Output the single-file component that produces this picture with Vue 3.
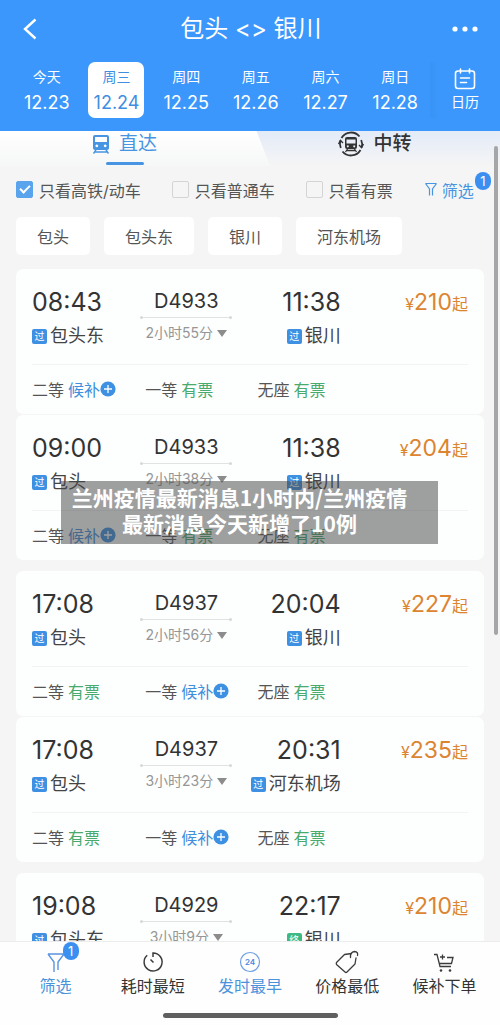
<script setup>
import { ref } from 'vue'

const days = [
  { week: '今天', date: '12.23' },
  { week: '周三', date: '12.24' },
  { week: '周四', date: '12.25' },
  { week: '周五', date: '12.26' },
  { week: '周六', date: '12.27' },
  { week: '周日', date: '12.28' },
]
const activeDay = ref('12.24')

const options = ref([
  { id: 'fast', label: '只看高铁/动车', checked: true },
  { id: 'normal', label: '只看普通车', checked: false },
  { id: 'available', label: '只看有票', checked: false },
])

const stations = ['包头', '包头东', '银川', '河东机场']

const seats = (a, b, c) => [
  { name: '二等', wait: a },
  { name: '一等', wait: b },
  { name: '无座', wait: c },
]

const groups = [
  [
    { dep: '08:43', from: '包头东', no: 'D4933', time: '2小时55分', arr: '11:38', to: '银川', end: false, price: 210, seats: seats(true, false, false) },
    { dep: '09:00', from: '包头', no: 'D4933', time: '2小时38分', arr: '11:38', to: '银川', end: false, price: 204, seats: seats(true, false, false) },
  ],
  [
    { dep: '17:08', from: '包头', no: 'D4937', time: '2小时56分', arr: '20:04', to: '银川', end: false, price: 227, seats: seats(false, true, false) },
    { dep: '17:08', from: '包头', no: 'D4937', time: '3小时23分', arr: '20:31', to: '河东机场', end: false, price: 235, seats: seats(false, true, false) },
  ],
  [
    { dep: '19:08', from: '包头东', no: 'D4929', time: '3小时9分', arr: '22:17', to: '银川', end: true, price: 210, seats: seats(false, false, false) },
  ],
]
</script>

<template>
  <div class="page">
    <header class="header">
      <div class="title-bar">
        <button class="icon-btn" type="button" aria-label="返回">
          <svg width="16" height="22" viewBox="0 0 16 22"><path d="M13.500 1.500 3 11l10.500 9.500" fill="none" stroke="#fff" stroke-width="2.400" /></svg>
        </button>
        <h1 class="title">包头 &lt;&gt; 银川</h1>
        <button class="icon-btn" type="button" aria-label="更多">
          <svg width="26" height="6" viewBox="0 0 26 6" fill="#fff"><circle cx="3" cy="3" r="2.6" /><circle cx="13" cy="3" r="2.6" /><circle cx="23" cy="3" r="2.6" /></svg>
        </button>
      </div>
      <div class="dates">
        <div class="days">
          <button
            v-for="d in days"
            :key="d.date"
            type="button"
            class="day"
            :class="{ active: d.date === activeDay }"
            @click="activeDay = d.date"
          >
            <span class="week">{{ d.week }}</span>
            <span class="date">{{ d.date }}</span>
          </button>
        </div>
        <button class="calendar" type="button">
          <svg width="22" height="22" viewBox="0 0 22 22" fill="none" stroke="#fff" stroke-width="1.6" stroke-linecap="round">
            <rect x="1.5" y="3" width="19" height="17.5" rx="2.5" />
            <path d="M6.500 1v4M15.500 1v4M6.500 10h9M6.500 14.500h6" />
          </svg>
          <span>日历</span>
        </button>
      </div>
    </header>

    <main class="main">
      <nav class="tabs">
        <button class="tab tab-on" type="button">
          <span class="tab-body">
            <svg width="18" height="20" viewBox="0 0 18 20">
              <path fill="#4795e2" fill-rule="evenodd" d="M3 1h12q2 0 2 2v11q0 2-2 2H3q-2 0-2-2V3q0-2 2-2zM3 3v5h12V3zM4.800 10.500a1.400 1.400 0 1 0 .01 0zM13.200 10.500a1.400 1.400 0 1 0 .01 0z" />
              <path d="M4 16 1.500 19.500M14 16l2.500 3.500M3 18h12" stroke="#4795e2" stroke-width="1.400" fill="none" />
            </svg>
            直达
          </span>
        </button>
        <button class="tab" type="button">
          <span class="tab-body">
            <svg width="26" height="26" viewBox="0 0 26 26">
              <g fill="none" stroke="#333" stroke-width="1.800">
                <path d="M4.500 20.500A11 11 0 0 0 22.500 19M21.500 5.500A11 11 0 0 0 3.500 7" />
                <path d="M2.300 9.500A11.200 11.200 0 0 0 2.800 17M23.700 16.500A11.200 11.200 0 0 0 23.200 9" />
                <path d="M.5 13l2-3.500 2.500 2.500M25.500 13l-2 3.500L21 14" stroke-width="1.400" />
                <path d="M9.500 18 7.500 21M16.500 18l2 3M9 19.500h8" stroke-width="1.300" />
              </g>
              <path fill="#333" fill-rule="evenodd" d="M9 6h8q2 0 2 2v8q0 2-2 2H9q-2 0-2-2V8q0-2 2-2zM8.500 8.500v4h9v-4zM9.800 14.200a1 1 0 1 0 .01 0zM16.200 14.200a1 1 0 1 0 .01 0z" />
            </svg>
            中转
          </span>
        </button>
      </nav>

      <div class="filters">
        <label v-for="o in options" :key="o.id" class="check">
          <input v-model="o.checked" type="checkbox" />
          <span>{{ o.label }}</span>
        </label>
        <button class="filter-btn" type="button">
          <svg width="14" height="15" viewBox="0 0 14 15" fill="none" stroke="#4795e2" stroke-width="1.200"><path d="M1.500 1.500h11M1.500 1.500 5.500 7v6.500M12.500 1.500 8.500 7v6.500" /></svg>
          筛选
          <span class="badge">1</span>
        </button>
      </div>

      <div class="chips">
        <button v-for="s in stations" :key="s" class="chip" type="button">{{ s }}</button>
      </div>

      <div class="groups">
        <section v-for="(g, i) in groups" :key="i" class="group">
          <article v-for="(t, k) in g" :key="k" class="card">
            <div class="trip">
              <div class="end">
                <div class="clock">{{ t.dep }}</div>
                <div class="station"><span class="tag">过</span>{{ t.from }}</div>
              </div>
              <div class="middle">
                <div class="train">{{ t.no }}</div>
                <div class="line"></div>
                <div class="duration">
                  {{ t.time }}
                  <svg width="10" height="7" viewBox="0 0 10 7"><path d="M0 0h10L5 7z" fill="#8c8c8c" /></svg>
                </div>
              </div>
              <div class="end arrive">
                <div class="clock">{{ t.arr }}</div>
                <div class="station">
                  <span class="tag" :class="{ final: t.end }">{{ t.end ? '终' : '过' }}</span>{{ t.to }}
                </div>
              </div>
              <div class="price"><span>¥</span><b>{{ t.price }}</b><span>起</span></div>
            </div>
            <div class="seats">
              <div v-for="s in t.seats" :key="s.name" class="seat">
                <span>{{ s.name }}</span>
                <span v-if="s.wait" class="wait">
                  候补<svg width="16" height="16" viewBox="0 0 16 16"><circle cx="8" cy="8" r="7.600" fill="#3e90e2" /><path d="M8 4v8M4 8h8" stroke="#fff" stroke-width="1.300" /></svg>
                </span>
                <span v-else class="ok">有票</span>
              </div>
            </div>
          </article>
        </section>
      </div>
      <div class="scrollbar"></div>
    </main>

    <div class="caption">兰州疫情最新消息1小时内/兰州疫情<br />最新消息今天新增了10例</div>

    <footer class="footer">
      <nav class="tools">
        <button class="tool blue" type="button">
          <span class="tool-icon">
            <svg width="22" height="22" viewBox="0 0 22 22" fill="none" stroke="#5b93e0" stroke-width="1.400"><path d="M3 3h16M3 3l6 8v10M19 3l-6 8v8" /></svg>
            <span class="badge">1</span>
          </span>
          筛选
        </button>
        <button class="tool" type="button">
          <span class="tool-icon">
            <svg width="22" height="22" viewBox="0 0 22 22" fill="none" stroke="#3c3c3c" stroke-width="1.500"><path d="M11 6V2a9 9 0 1 1-5.800 2.200M8.500 8.500l3 3" /></svg>
          </span>
          耗时最短
        </button>
        <button class="tool blue" type="button">
          <span class="tool-icon">
            <svg width="22" height="22" viewBox="0 0 22 22" fill="none" stroke="#6f9fe6"><circle cx="11" cy="11" r="9.500" stroke-width="1.200" /><text x="11" y="13.500" text-anchor="middle" class="icon-text">24</text></svg>
          </span>
          发时最早
        </button>
        <button class="tool" type="button">
          <span class="tool-icon">
            <svg width="24" height="24" viewBox="0 0 24 24" fill="none" stroke="#3c3c3c" stroke-width="1.300" stroke-linejoin="round" stroke-linecap="round"><path d="M16.500 3.500 9.500 4.500 1.500 12.500Q1 13.500 1.500 14.500L10 22Q11 23 12 22L20 14 21 8M15.500 7.500Q15 2 19.500 1.500 23.500 2 22.500 5.500" /></svg>
          </span>
          价格最低
        </button>
        <button class="tool" type="button">
          <span class="tool-icon">
            <svg width="22" height="22" viewBox="0 0 22 22" fill="none" stroke="#3c3c3c" stroke-width="1.300"><path d="M1 3.500h3L7 15.500h11M14 6.500h6L18.500 12.500H6.500M9.500 3.500v5M7 6h5" /><circle cx="8" cy="19.500" r="1.300" fill="#3c3c3c" stroke="none" /><circle cx="17" cy="19.500" r="1.300" fill="#3c3c3c" stroke="none" /></svg>
          </span>
          候补下单
        </button>
      </nav>
      <div class="home-bar"></div>
    </footer>
  </div>
</template>

<style>
body {
  margin: 0;
  background: #f5f5f5;
}
</style>

<style scoped>
.page {
  position: relative;
  display: flex;
  flex-direction: column;
  height: 100vh;
  overflow: hidden;
  background: #f5f5f5;
  color: #333;
  font-family: Inter, "Noto Sans CJK SC", sans-serif;
  font-size: 16px;
}
button {
  margin: 0;
  padding: 0;
  border: 0;
  background: none;
  color: inherit;
  font: inherit;
}
svg {
  display: block;
  flex: none;
}
.header {
  flex: none;
  height: 131px;
  background: #3b97fb;
  color: #fff;
}
.title-bar {
  display: flex;
  align-items: center;
  justify-content: space-between;
  height: 58px;
  padding: 0 20px 0 22px;
}
.icon-btn {
  display: flex;
  align-items: center;
  width: 28px;
  height: 28px;
}
.title {
  margin: 0;
  font-size: 24px;
  font-weight: 400;
  line-height: 32px;
}
.dates {
  display: flex;
  padding-top: 4px;
}
.days {
  display: grid;
  flex: 1;
  grid-template-columns: repeat(6, 1fr);
  justify-items: center;
  padding-left: 12px;
}
.day {
  display: flex;
  flex-direction: column;
  align-items: center;
  width: 56px;
  height: 56px;
  padding-top: 4px;
  box-sizing: border-box;
  border-radius: 7px;
}
.day.active {
  background: #fff;
  color: #3f8ee0;
}
.week {
  font-size: 14px;
  line-height: 22px;
}
.date {
  font-size: 18px;
  line-height: 29px;
}
.calendar {
  display: flex;
  flex-direction: column;
  align-items: center;
  gap: 1px;
  width: 70px;
  padding-top: 6px;
  background: linear-gradient(90deg, #3893f6, #3b97fb 8px);
  font-size: 14px;
  line-height: 22px;
}
.main {
  position: relative;
  flex: 1;
  min-height: 0;
  overflow: hidden;
}
.tabs {
  display: grid;
  grid-template-columns: 270fr 230fr;
  height: 35px;
  background: linear-gradient(#e3ebf8, #f5f5f5);
}
.tab {
  display: flex;
  justify-content: center;
  font-size: 19px;
  font-weight: 500;
  line-height: 24px;
}
.tab-on {
  padding-right: 21px;
  background: linear-gradient(#fff, #f6f7f7);
  clip-path: polygon(0 0, 95% 0, 100% 100%, 0 100%);
  color: #4795e2;
  font-weight: 400;
}
.tab:last-child {
  padding-right: 20px;
}
.tab-body {
  position: relative;
  display: flex;
  align-items: center;
  gap: 9px;
  height: 25px;
}
.tab-on .tab-body::after {
  content: "";
  position: absolute;
  left: 14px;
  bottom: -9px;
  width: 38px;
  height: 3px;
  border-radius: 2px;
  background: #4795e2;
}
.filters {
  display: flex;
  align-items: center;
  gap: 31px;
  height: 47px;
  padding-left: 16px;
  color: #555;
  white-space: nowrap;
}
.check {
  display: flex;
  align-items: center;
  gap: 6px;
}
.check input {
  appearance: none;
  width: 17px;
  height: 17px;
  margin: 0;
  border: 1px solid #d4d4d6;
  border-radius: 2px;
}
.check input:checked {
  border-color: #5aa4ee;
  background: #5aa4ee;
}
.check input:checked::before {
  content: "";
  display: block;
  width: 8px;
  height: 4px;
  margin: 3px 0 0 3px;
  border: solid #fff;
  border-width: 0 0 2px 2px;
  transform: rotate(-45deg);
}
.filter-btn {
  position: relative;
  display: flex;
  align-items: center;
  gap: 4px;
  color: #4795e2;
}
.badge {
  position: absolute;
  width: 16px;
  height: 18px;
  border-radius: 8px;
  background: #3b8ff0;
  color: #fff;
  font-size: 13px;
  line-height: 18px;
  text-align: center;
}
.filter-btn .badge {
  right: -17px;
  top: -6px;
}
.chips {
  display: flex;
  gap: 14px;
  padding: 4px 16px 14px;
}
.chip {
  height: 38px;
  padding: 0 21px;
  border-radius: 5px;
  background: #fff;
  color: #555;
}
.groups {
  display: flex;
  flex-direction: column;
  gap: 11px;
  padding: 0 16px;
}
.group {
  display: flex;
  flex-direction: column;
  gap: 1px;
}
.card {
  padding: 0 16px;
  border-radius: 7px;
  background: #fdfefe;
}
.trip {
  display: grid;
  grid-template-columns: 108fr 92fr 108fr 127fr;
  padding: 17px 0 16px;
  border-bottom: 1px solid #f1f3f5;
}
.clock {
  font-size: 25px;
  line-height: 32px;
}
.station {
  display: flex;
  align-items: center;
  gap: 3px;
  margin-top: 6px;
  color: #444;
  font-size: 18px;
  line-height: 24px;
  white-space: nowrap;
}
.arrive {
  display: flex;
  flex-direction: column;
  align-items: flex-end;
}
.tag {
  flex: none;
  width: 15px;
  height: 15px;
  border-radius: 2px;
  background: #3e90e2;
  color: #fff;
  font-size: 10px;
  line-height: 15px;
  text-align: center;
}
.tag.final {
  background: #3dba83;
}
.middle {
  text-align: center;
}
.train {
  font-size: 20px;
  line-height: 31px;
}
.line {
  position: relative;
  height: 1px;
  background: #e2e2e4;
}
.line::before,
.line::after {
  content: "";
  position: absolute;
  top: -1px;
  width: 3px;
  height: 3px;
  border-radius: 50%;
  background: #d8d8da;
}
.line::before {
  left: 0;
}
.line::after {
  right: 0;
}
.duration {
  display: flex;
  align-items: center;
  justify-content: center;
  gap: 4px;
  margin-top: 4px;
  color: #969696;
  font-size: 14px;
  line-height: 22px;
  white-space: nowrap;
}
.price {
  color: #dc8430;
  font-size: 16px;
  line-height: 32px;
  text-align: right;
}
.price b {
  font-size: 23px;
  font-weight: 400;
}
.seats {
  display: grid;
  grid-template-columns: 113fr 112fr 210fr;
  align-items: center;
  height: 47px;
  padding-bottom: 2px;
  color: #555;
}
.seat,
.wait {
  display: flex;
  align-items: center;
}
.seat {
  gap: 4px;
}
.wait {
  color: #3f8fdc;
}
.ok {
  color: #48aa6e;
}
.scrollbar {
  position: absolute;
  top: 15px;
  right: 2px;
  width: 4px;
  height: 489px;
  border-radius: 2px;
  background: #a6a6a8;
}
.caption {
  position: absolute;
  top: 481px;
  left: 61px;
  right: 62px;
  padding: 3px 20px 8px 0;
  background: rgba(70, 70, 70, 0.52);
  color: #fff;
  font-family: "Noto Sans CJK SC", sans-serif;
  font-size: 21px;
  font-weight: 700;
  line-height: 26px;
  text-align: center;
  white-space: nowrap;
}
.footer {
  flex: none;
  height: 84px;
  box-sizing: border-box;
  border-top: 1px solid #ececec;
  background: #fefefe;
}
.tools {
  display: grid;
  grid-template-columns: repeat(5, 1fr);
  padding: 8px 7px 0;
}
.tool {
  display: flex;
  flex-direction: column;
  align-items: center;
  line-height: 24px;
}
.blue {
  color: #4a93dc;
}
.tool-icon {
  position: relative;
  display: flex;
  align-items: center;
  height: 24px;
}
.tool-icon .badge {
  left: 18px;
  top: -8px;
}
.icon-text {
  fill: #4a86dc;
  stroke: none;
  font-size: 8px;
  font-weight: 600;
}
.home-bar {
  width: 35%;
  height: 5px;
  margin: 15px auto 0;
  border-radius: 3px;
  background: #5f5f5f;
}
</style>
